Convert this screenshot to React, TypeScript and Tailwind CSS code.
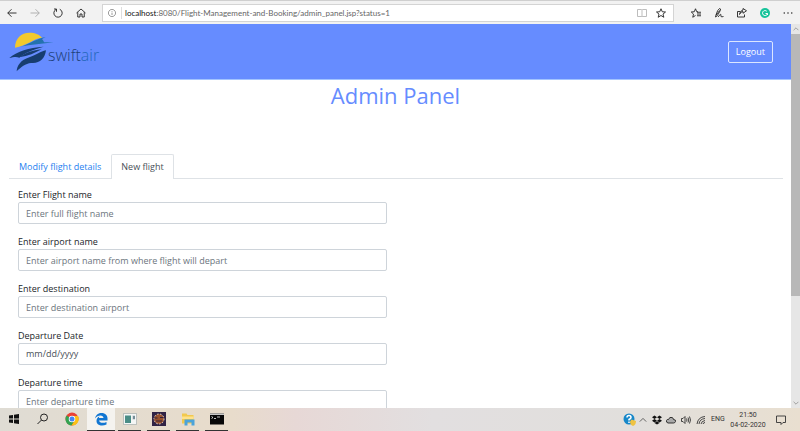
import type { ReactNode } from "react";

const fields = [
  { id: "flight", label: "Enter Flight name", placeholder: "Enter full flight name", type: "text" },
  { id: "from", label: "Enter airport name", placeholder: "Enter airport name from where flight will depart", type: "text" },
  { id: "to", label: "Enter destination", placeholder: "Enter destination airport", type: "text" },
  { id: "date", label: "Departure Date", placeholder: "", type: "date" },
  { id: "time", label: "Departure time", placeholder: "Enter departure time", type: "text" },
];

function Line({ d, size = "size-[10px]" }: { d: string; size?: string }) {
  return (
    <svg viewBox="0 0 20 20" className={`${size} shrink-0 fill-none stroke-current stroke-[1.8]`} aria-hidden="true">
      <path d={d} />
    </svg>
  );
}

function BarButton({ label, children, className = "" }: { label: string; children: ReactNode; className?: string }) {
  return (
    <button type="button" aria-label={label} className={`flex size-[10px] shrink-0 items-center justify-center ${className}`}>
      {children}
    </button>
  );
}

const star = "M10 1.500L12.500 7.500L19 8L14 12.200L15.600 18.500L10 15L4.400 18.500L6 12.200L1 8L7.500 7.500Z";

function Toolbar() {
  return (
    <div className="flex h-6 shrink-0 items-center border-t border-[#cfcfcf] bg-[#f2f2f2] text-[#222]">
      <div className="ml-[7px] flex gap-[13px]">
        <BarButton label="Back"><Line d="M19 10H1.500M9 2.500L1.500 10L9 17.500" /></BarButton>
        <BarButton label="Forward" className="text-[#a8a8a8]"><Line d="M1 10H18.500M11 2.500L18.500 10L11 17.500" /></BarButton>
        <BarButton label="Refresh"><Line d="M13.500 2.500A8.300 8.300 0 1 1 6 2.800M2 2H7V7.500" /></BarButton>
        <BarButton label="Home"><Line d="M1 10L10 2L19 10M3.500 8.500V18H8V12H12V18H16.500V8.500" /></BarButton>
      </div>
      <div className="ml-4 flex h-[18px] flex-1 items-center border border-[#d4d4d4] bg-white font-[Lato,sans-serif]">
        <BarButton label="Site information" className="ml-1 text-[#777]">
          <Line size="size-[8px]" d="M10 1A9 9 0 1 1 9.990 1M10 9V15M10 5V7" />
        </BarButton>
        <span className="ml-1 mr-[3px] h-3 w-px bg-[#ddd]" />
        <label htmlFor="url" className="text-[8px] text-[#111]">localhost</label>
        <input id="url" defaultValue=":8080/Flight-Management-and-Booking/admin_panel.jsp?status=1" className="min-w-0 flex-1 bg-transparent text-[8px] text-[#666] outline-none" />
        <BarButton label="Reading view" className="mr-[9px] text-[#b5b5b5]"><Line d="M1 3H9L10 4L11 3H19V17H11L10 18L9 17H1ZM10 4V18" /></BarButton>
        <BarButton label="Add to favorites" className="mr-[7px]"><Line d={star} /></BarButton>
      </div>
      <div className="ml-[17px] mr-[7px] flex gap-[13px]">
        <BarButton label="Favorites"><Line d="M14 7.500H11.500L9 1.500L6.500 7.500L0.500 8L5 12.200L3.500 18.500L9 15M12 8.500H20M12 12H20M12 15.500H20" /></BarButton>
        <BarButton label="Notes"><Line d="M5 17L3 18L4 14Q7 3 11 1Q15 1 12 6Q9 12 5 17M4 14Q9 9 11 5M8 18Q14 10 14 14Q12 19 19 17" /></BarButton>
        <BarButton label="Share"><Line d="M6 7H1V18H15V13M5 13Q7 7 12 7V10.500L19 5.500L12 1V4Q6 5 5 13" /></BarButton>
        <BarButton label="Grammarly">
          <svg viewBox="0 0 20 20" className="size-[10px]" aria-hidden="true">
            <circle cx="10" cy="10" r="10" fill="#15c39a" />
            <path d="M13.500 6.500A5 5 0 1 0 15 11H11M15 11V14" fill="none" stroke="white" strokeWidth="2" />
          </svg>
        </BarButton>
        <BarButton label="More">
          <svg viewBox="0 0 20 20" className="size-[10px] fill-current" aria-hidden="true">
            <circle cx="2.500" cy="10" r="1.500" /><circle cx="10" cy="10" r="1.500" /><circle cx="17.500" cy="10" r="1.500" />
          </svg>
        </BarButton>
      </div>
    </div>
  );
}

function Logo() {
  return (
    <a href="#home" aria-label="swiftair" className="flex items-center text-[16px] leading-5 font-light text-[#1d3f78]">
      <svg viewBox="27 36 135 120" className="h-10 w-[45px] shrink-0" aria-hidden="true">
        <path d="M45 83C45 55 64 38 88 38C106 38 119 44 126 53C101 55 79 78 45 83Z" fill="#f3c92d" />
        <path d="M60 80C86 75 99 59 137 51L126 57C130 61 131 64 132 67L161 67C128 71 92 74 60 80Z" fill="#2372ae" />
        <path d="M28 114C54 92 84 84 131 80C95 90 74 98 58 113C49 109 40 111 28 114Z" fill="#173d70" />
        <path d="M58 112C78 96 98 92 125 88C106 99 84 108 58 112Z" fill="#173d70" />
        <path d="M50 154C51 137 62 120 88 112C110 105 121 94 138 91C135 116 118 132 93 129C77 130 62 142 50 154Z" fill="#173d70" />
      </svg>
      <span className="mt-[6px] -ml-[6px]">swift<span className="text-[#2468bb]">air</span></span>
    </a>
  );
}

function ScrollBar() {
  return (
    <div className="flex w-[9px] shrink-0 flex-col bg-[#e6e6e6] text-[#666]">
      <button type="button" aria-label="Scroll up" className="flex h-[10px] items-center justify-center"><Line size="size-[6px]" d="M2 14L10 6L18 14" /></button>
      <div className="flex-1"><div className="h-[72%] bg-[#b8b8b8]" /></div>
      <button type="button" aria-label="Scroll down" className="flex h-[10px] items-center justify-center"><Line size="size-[6px]" d="M2 6L10 14L18 6" /></button>
    </div>
  );
}

function Task({ label, children, state = "" }: { label: string; children: ReactNode; state?: string }) {
  return (
    <button type="button" aria-label={label} className="flex w-[29px] justify-center">
      <span className={`flex h-[23px] items-center justify-center border-b ${state === "active" ? "w-7 border-[#333] bg-[#f5f3ef]" : state === "open" ? "w-[23px] border-[#333]" : "w-[23px] border-transparent"}`}>
        <svg viewBox="0 0 28 28" className="size-[14px]" aria-hidden="true">{children}</svg>
      </span>
    </button>
  );
}

function TaskBar() {
  return (
    <div className="flex h-[23px] shrink-0 items-center bg-[linear-gradient(90deg,#dfdcd4_0%,#e8dccb_29%,#e7d8d6_37%,#e2dfe0_54%,#e1dfdc_80%,#e9dfd0_100%)] text-[#333]">
      <div className="-ml-px flex">
        <Task label="Start"><path d="M4 7L12 6V13H4ZM14 5.500L24 4V13H14ZM4 15H12V22L4 21ZM14 15H24V24L14 22.500Z" fill="#111" /></Task>
        <Task label="Search"><g fill="none" stroke="#222" strokeWidth="2"><circle cx="16" cy="11" r="7" /><path d="M11 16L3 24" /></g></Task>
        <Task label="Chrome">
          <circle cx="14" cy="14" r="13" fill="#e94235" />
          <path d="M14 14L3 7A13 13 0 0 0 13 27L20 16Z" fill="#34a351" />
          <path d="M14 8H26A13 13 0 0 1 13 27L20 16Z" fill="#fbc116" />
          <circle cx="14" cy="14" r="6.500" fill="white" /><circle cx="14" cy="14" r="5" fill="#4285f4" />
        </Task>
        <Task label="Edge" state="active">
          <path d="M2 13C4 5 9 2 15 2C23 2 27 7 27 13V17H10C11 22 18 23 25 20V25C16 29 5 27 5 18C5 13 8 10 11 9C10 10 10 11 10 12H19C19 5 7 5 2 13Z" fill="#1276d2" />
        </Task>
        <Task label="Application" state="open">
          <path d="M1 3H27V25H1Z" fill="#f4f6f5" stroke="#8b9698" /><path d="M4 7H16V22H4Z" fill="#4a8d86" /><path d="M19 7H24V15H19Z" fill="#bac6c9" /><path d="M22 8V14" stroke="#335566" strokeWidth="2" />
        </Task>
        <Task label="Eclipse" state="open">
          <path d="M0 0H28V28H0Z" fill="#302345" /><circle cx="14" cy="14" r="10" fill="#96502d" stroke="#e5d7cd" strokeWidth="2" strokeDasharray="3 3" /><path d="M5 12H11M16 11H22M8 18H20" stroke="#35203a" strokeWidth="2" />
        </Task>
        <Task label="File Explorer" state="open">
          <path d="M2 3H11L13 6H25V23H2Z" fill="#f2c94e" /><path d="M2 9H25V14H2Z" fill="#ffe28a" /><path d="M7 15H27V27H21V21H13V27H7Z" fill="#4ba3da" />
        </Task>
        <Task label="Command Prompt" state="open">
          <path d="M0 3H28V25H0Z" fill="#080808" /><path d="M0 3H28V6H0Z" fill="#c8c8c8" /><path d="M3 9L6 11L3 13M8 13H12M14 10H20" stroke="white" fill="none" strokeWidth="1.500" />
        </Task>
      </div>
      <div className="ml-auto flex items-center gap-[5px] font-[Roboto,sans-serif] text-[7px]">
        <div className="flex items-center gap-1">
          <BarButton label="Help">
            <svg viewBox="0 0 26 26" className="size-[13px] shrink-0" aria-hidden="true">
              <circle cx="12" cy="12" r="11" fill="#1687c9" /><path d="M8 9Q8 5 12 5T16 9Q16 11 12 13V15M12 17V20" stroke="white" strokeWidth="3" fill="none" /><path d="M17 13L26 16Q26 24 20 26Q14 23 14 17Z" fill="#efc342" />
            </svg>
          </BarButton>
          <BarButton label="Show hidden icons"><Line size="size-[8px]" d="M2 14L10 6L18 14" /></BarButton>
          <BarButton label="Dropbox">
            <svg viewBox="0 0 20 20" className="size-[10px] fill-[#111]" aria-hidden="true"><path d="M5 1L10 4.500L5 8L0 4.500ZM15 1L20 4.500L15 8L10 4.500ZM5 8L10 11.500L5 15L0 11.500ZM15 8L20 11.500L15 15L10 11.500ZM10 12.500L15 16L10 19L5 16Z" /></svg>
          </BarButton>
          <BarButton label="OneDrive">
            <svg viewBox="0 0 20 20" className="size-[10px] fill-[#aaa] stroke-[#222] stroke-[1.8]" aria-hidden="true"><path d="M4 16Q0 15 1 11Q2 8 5 9Q7 3 12 5Q15 6 15 9Q20 9 19 13Q18 16 15 16Z" /></svg>
          </BarButton>
        </div>
        <BarButton label="Volume"><Line d="M1 7H4L8 3V17L4 13H1ZM11 7Q13 10 11 13M14 5Q17 10 14 15M17 3Q21 10 17 17" /></BarButton>
        <BarButton label="Network"><Line d="M2 18Q4 4 18 3M6 18Q7 8 18 7M10 18Q11 12 18 11M14 18Q15 15 18 15" /></BarButton>
        <span className="w-[14px]">ENG</span>
        <time className="flex w-9 flex-col items-center leading-[10px] whitespace-nowrap"><span>21:50</span><span>04-02-2020</span></time>
        <BarButton label="Notifications" className="ml-[5px] mr-[14px]"><Line d="M1 2H19V15H14L10 19V15H1Z" /></BarButton>
      </div>
    </div>
  );
}

export default function App() {
  return (
    <div className="flex h-screen flex-col overflow-hidden bg-white font-['Open_Sans','Noto_Sans',sans-serif]">
      <Toolbar />
      <div className="flex min-h-0 flex-1">
        <main className="min-w-0 flex-1 overflow-hidden">
          <header className="flex h-14 items-center justify-between border-b border-[#a3c4ff] bg-[#668cff] pr-[18px] pl-[9px]">
            <Logo />
            <button type="button" className="h-[22px] rounded-[2px] border border-[#dce6ff] px-[7px] text-[9px] text-white">Logout</button>
          </header>
          <h1 className="text-center text-[22px] leading-[30px] text-[#668cff]">Admin Panel</h1>
          <div className="mt-11 mr-2 ml-[9px]">
            <div role="tablist" className="flex h-[25px] border-b border-[#dee2e6] text-[9px]">
              <button type="button" role="tab" aria-selected="false" className="border-t border-transparent px-[10px] text-[#1f7ff0]">Modify flight details</button>
              <button type="button" role="tab" aria-selected="true" className="-mb-px rounded-t-[2px] border border-b-0 border-[#dee2e6] bg-white px-[9px] text-[#495057]">New flight</button>
            </div>
            <form className="flex w-1/2 flex-col gap-[11px] px-[9px] pt-[9px] text-[9px]">
              {fields.map((f) => (
                <div key={f.id} className="flex flex-col">
                  <label htmlFor={f.id} className="leading-[14px] text-[#212529]">{f.label}</label>
                  <input
                    id={f.id}
                    type={f.type}
                    placeholder={f.placeholder}
                    className="h-[22px] rounded-[2px] border border-[#ced4da] bg-white px-[7px] text-[#495057] placeholder:text-[#6c757d] [&::-webkit-calendar-picker-indicator]:hidden [&::-webkit-datetime-edit-day-field]:p-0 [&::-webkit-datetime-edit-month-field]:p-0 [&::-webkit-datetime-edit-year-field]:p-0"
                  />
                </div>
              ))}
            </form>
          </div>
        </main>
        <ScrollBar />
      </div>
      <TaskBar />
    </div>
  );
}
